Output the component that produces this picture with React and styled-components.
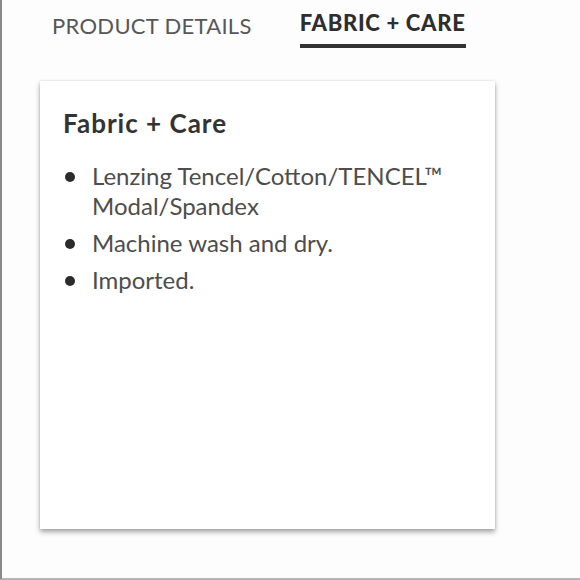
import React from 'react';
import styled, { createGlobalStyle } from 'styled-components';

const GlobalStyle = createGlobalStyle`
  html, body {
    margin: 0;
    padding: 0;
    background: #fdfdfd;
  }
  body {
    font-family: Lato, "Open Sans", sans-serif;
  }
`;

const Frame = styled.div`
  width: 580px;
  height: 580px;
  box-sizing: border-box;
  border-left: 2px solid #8a8a8a;
  border-bottom: 2px solid #b5b5b5;
  background: #fdfdfd;
  padding: 8px 0 0 38px;
  display: flex;
  flex-direction: column;
`;

const Tabs = styled.div`
  display: flex;
  align-items: flex-start;
  gap: 48px;
  padding-left: 12px;
`;

const Tab = styled.div`
  font-size: 22px;
  line-height: 30px;
  margin-top: ${p => (p.active ? '0' : '3px')};
  letter-spacing: ${p => (p.active ? '0.7px' : '0.3px')};
  color: ${p => (p.active ? '#2e2e2e' : '#575757')};
  font-weight: ${p => (p.active ? 900 : 400)};
  padding-bottom: 6px;
  border-bottom: 4px solid ${p => (p.active ? '#333' : 'transparent')};
`;

const Card = styled.div`
  margin-top: 30px;
  width: 455px;
  height: 448px;
  box-sizing: border-box;
  background: #fff;
  box-shadow: 0 3px 5px rgba(0, 0, 0, 0.35), 0 0 2px rgba(0, 0, 0, 0.12);
  padding: 26px 24px 0 23px;
`;

const Heading = styled.h3`
  margin: 0 0 22px;
  font-size: 26px;
  font-weight: 700;
  letter-spacing: 1px;
  color: #333;
  line-height: 32px;
`;

const List = styled.ul`
  margin: 0;
  padding: 0;
  list-style: none;
  display: flex;
  flex-direction: column;
  gap: 7px;
`;

const Item = styled.li`
  position: relative;
  padding-left: 29px;
  font-size: 24px;
  line-height: 30px;
  color: #4d4d4d;

  &::before {
    content: '';
    position: absolute;
    left: 2px;
    top: 11px;
    width: 10px;
    height: 10px;
    border-radius: 50%;
    background: #2b2b2b;
  }
`;

export default function App() {
  return (
    <>
      <GlobalStyle />
      <Frame>
        <Tabs>
          <Tab>PRODUCT DETAILS</Tab>
          <Tab active>FABRIC + CARE</Tab>
        </Tabs>
        <Card>
          <Heading>Fabric + Care</Heading>
          <List>
            <Item>Lenzing Tencel/Cotton/TENCEL™ Modal/Spandex</Item>
            <Item>Machine wash and dry.</Item>
            <Item>Imported.</Item>
          </List>
        </Card>
      </Frame>
    </>
  );
}
